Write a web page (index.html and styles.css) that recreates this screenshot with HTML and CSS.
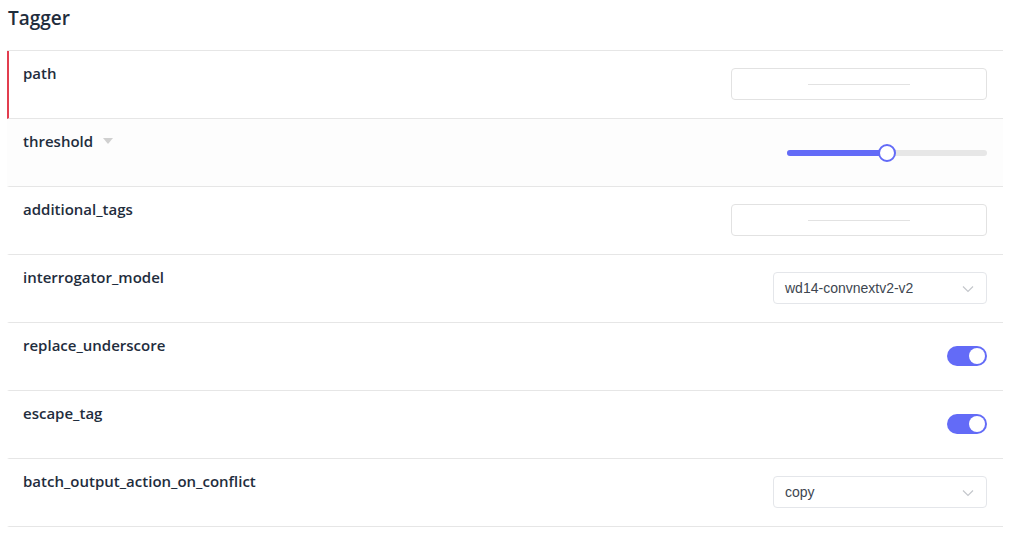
FILE: index.html
```html
<!DOCTYPE html>
<html>
<head>
<meta charset="utf-8">
<link rel="stylesheet" href="styles.css">
</head>
<body>
<div class="page">
  <h2 class="title">Tagger</h2>
  <div class="list">
    <div class="row row-error">
      <div class="label">path</div>
      <div class="control"><div class="input"><span class="ph"></span></div></div>
    </div>
    <div class="row row-gray">
      <div class="label">threshold <span class="caret"></span></div>
      <div class="control">
        <div class="slider"><div class="fill" style="width:100px"></div><div class="knob" style="left:100px"></div></div>
      </div>
    </div>
    <div class="row">
      <div class="label">additional_tags</div>
      <div class="control"><div class="input"><span class="ph"></span></div></div>
    </div>
    <div class="row">
      <div class="label">interrogator_model</div>
      <div class="control"><div class="select"><span>wd14-convnextv2-v2</span><svg class="chev" width="12" height="8" viewBox="0 0 12 8"><path d="M1 1.5l5 5 5-5" fill="none" stroke="#c4c7cc" stroke-width="1.2"/></svg></div></div>
    </div>
    <div class="row">
      <div class="label">replace_underscore</div>
      <div class="control"><div class="toggle"><div class="dot"></div></div></div>
    </div>
    <div class="row">
      <div class="label">escape_tag</div>
      <div class="control"><div class="toggle"><div class="dot"></div></div></div>
    </div>
    <div class="row">
      <div class="label">batch_output_action_on_conflict</div>
      <div class="control"><div class="select"><span>copy</span><svg class="chev" width="12" height="8" viewBox="0 0 12 8"><path d="M1 1.5l5 5 5-5" fill="none" stroke="#c4c7cc" stroke-width="1.2"/></svg></div></div>
    </div>
  </div>
</div>
</body>
</html>
```
FILE: styles.css
```css
* { box-sizing: border-box; }
body { margin: 0; background: #fff; font-family: "Open Sans", "Noto Sans", sans-serif; color: #213547; }
.page { padding: 0 30px 0 7px; }
.title { margin: 0; height: 50px; padding: 6px 0 0 1px; font-size: 19px; font-weight: 600; line-height: 24px; color: #1f2d3d; }
.list { border-top: 1px solid #e6e6e6; }
.row { height: 68px; border-bottom: 1px solid #e6e6e6; display: flex; align-items: center; justify-content: space-between; padding: 0 16px 1px 14px; border-left: 2px solid transparent; }
.row-error { border-left-color: #e23d4f; }
.row-gray { background: #fdfdfd; }
.label { align-self: flex-start; padding-top: 11px; font-size: 15px; font-weight: 600; line-height: 22px; color: #1f2d3d; display: flex; align-items: center; }
.caret { display: inline-block; margin-left: 10px; width: 0; height: 0; border-left: 5px solid transparent; border-right: 5px solid transparent; border-top: 6px solid #d0d0d0; }
.control { display: flex; align-items: center; }
.input { width: 256px; height: 32px; border: 1px solid #e2e2e2; border-radius: 4px; background: #fff; display: flex; align-items: center; justify-content: center; }
.ph { display: block; width: 102px; height: 1px; background: #e2e2e2; }
.slider { position: relative; width: 200px; height: 6px; border-radius: 3px; background: #e7e7e7; margin-top: 1px; }
.fill { height: 6px; border-radius: 3px; background: #636bf7; }
.knob { position: absolute; top: -6px; margin-left: -9px; width: 18px; height: 18px; border-radius: 50%; background: #fff; border: 2px solid #636bf7; }
.select { width: 214px; height: 32px; border: 1px solid #e4e6ea; border-radius: 4px; background: #fff; display: flex; align-items: center; justify-content: space-between; padding: 0 12px 0 11px; font-family: "Liberation Sans", Arial, sans-serif; font-size: 14px; color: #3d4650; }
.chev { margin-top: 1px; }
.toggle { width: 40px; height: 20px; border-radius: 10px; background: #636bf7; position: relative; }
.dot { position: absolute; right: 2px; top: 2px; width: 16px; height: 16px; border-radius: 50%; background: #fff; }
```
